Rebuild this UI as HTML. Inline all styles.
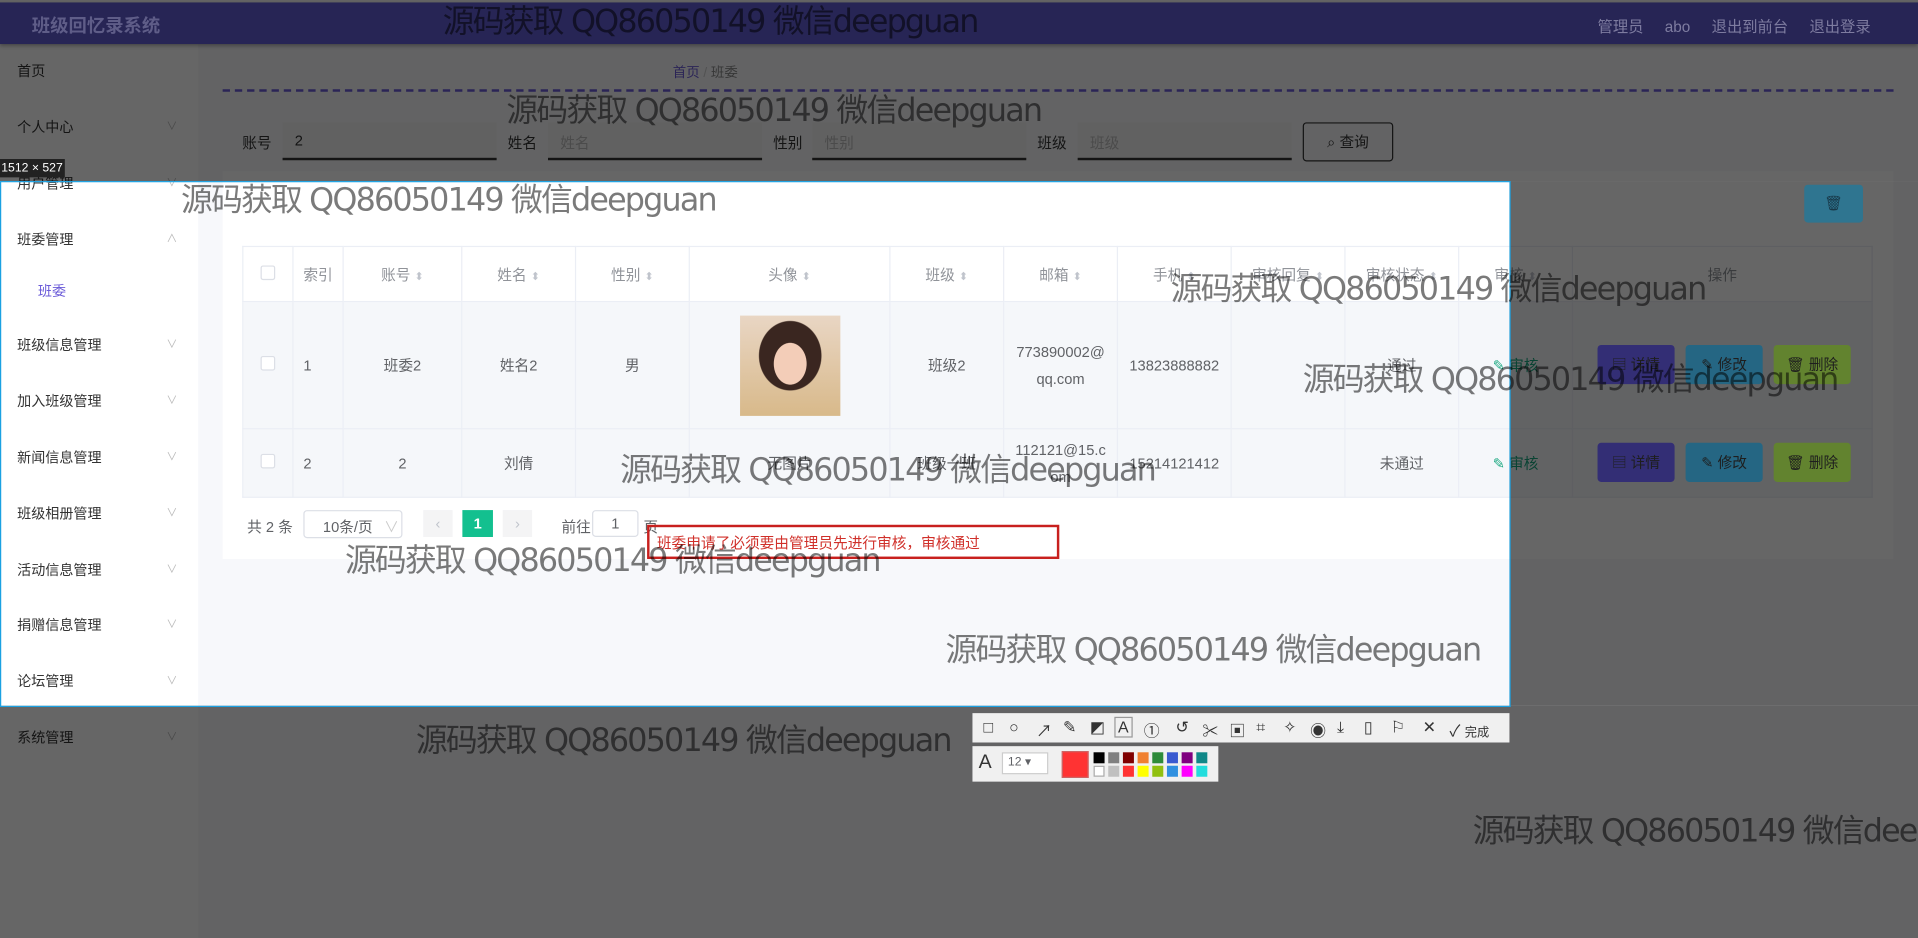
<!DOCTYPE html>
<html><head><meta charset="utf-8"><style>
*{margin:0;padding:0;box-sizing:border-box}
html,body{width:1918px;height:938px;overflow:hidden;background:#666}
body{font-family:"Liberation Sans","Noto Sans CJK SC",sans-serif;font-size:12px;color:#606266}
#w{position:absolute;left:0;top:0;width:1568px;height:767px;transform:scale(1.22322);transform-origin:0 0;background:#f7f8fb;overflow:hidden}
.a{position:absolute}
.side{left:0;top:36px;width:162px;height:731px;background:#fff}
.side div{position:absolute;left:14px;font-size:11.5px;color:#333}
.side span{position:absolute;left:136px;color:#bbb;font-size:9px}
.inp{position:absolute;top:100px;height:31px;background:#f3f3f3;border-bottom:2px solid #333;color:#bbb;padding:8px 10px;font-size:12px}
.lbl{position:absolute;top:108px;font-size:12px;color:#333}
table{position:absolute;left:198px;top:201px;border-collapse:collapse;width:1333px;table-layout:fixed}
td,th{border:1px solid #ebeef5;text-align:center;font-size:12px;color:#606266;font-weight:normal}
th{height:45px;background:#fff;color:#909399}
tr.r td{background:#f5f7fa}
.s{color:#c0c4cc;font-size:9px}
.cb{display:inline-block;width:12px;height:12px;border:1px solid #dcdfe6;background:#fff;border-radius:2px}
.btn{display:inline-block;width:63px;height:32px;line-height:32px;border-radius:3px;color:#1e1e1e;margin:0 3px;font-size:12px}
.ov{position:absolute;background:rgba(0,0,0,.6)}
.wm{position:absolute;font-size:26px;line-height:30px;color:rgba(0,0,0,.52);white-space:nowrap;z-index:20;font-family:"DejaVu Sans","Noto Sans CJK SC",sans-serif;letter-spacing:-1.5px}
.tb{position:absolute;background:#f0f0f0;z-index:15}
.tb i{position:absolute;font-style:normal;font-size:13px;color:#333;top:4px}
.sw{position:absolute;width:9px;height:9px}
</style></head><body><div id="w">
<div class="a side">
<div style="top:14px">首页</div>
<div style="top:60px">个人中心</div><span style="top:60px">∨</span>
<div style="top:106px">用户管理</div><span style="top:106px">∨</span>
<div style="top:152px">班委管理</div><span style="top:152px">∧</span>
<div style="top:194px;left:31px;color:#6b5bd8">班委</div>
<div style="top:238px">班级信息管理</div><span style="top:238px">∨</span>
<div style="top:284px">加入班级管理</div><span style="top:284px">∨</span>
<div style="top:330px">新闻信息管理</div><span style="top:330px">∨</span>
<div style="top:376px">班级相册管理</div><span style="top:376px">∨</span>
<div style="top:422px">活动信息管理</div><span style="top:422px">∨</span>
<div style="top:467px">捐赠信息管理</div><span style="top:467px">∨</span>
<div style="top:513px">论坛管理</div><span style="top:513px">∨</span>
<div style="top:559px">系统管理</div><span style="top:559px">∨</span>
</div>
<div class="a" style="left:550px;top:51px;font-size:11px;color:#6b5bd8">首页 <span style="color:#ccc">/</span> <span style="color:#888">班委</span></div>
<div class="a" style="left:182px;top:73px;width:1366px;border-top:2px dashed #6b5bd8"></div>
<div class="lbl" style="left:198px">账号</div><div class="inp" style="left:231px;width:175px;color:#333">2</div>
<div class="lbl" style="left:415px">姓名</div><div class="inp" style="left:448px;width:175px">姓名</div>
<div class="lbl" style="left:632px">性别</div><div class="inp" style="left:664px;width:175px">性别</div>
<div class="lbl" style="left:848px">班级</div><div class="inp" style="left:881px;width:175px">班级</div>
<div class="a" style="left:1065px;top:100px;width:74px;height:32px;border:1px solid #333;border-radius:3px;text-align:center;line-height:30px;color:#333">⌕ 查询</div>
<div class="a" style="left:182px;top:140px;width:1366px;height:317px;background:#fff"></div>
<table>
<colgroup><col style="width:41px"><col style="width:41px"><col style="width:97px"><col style="width:93px"><col style="width:93px"><col style="width:164px"><col style="width:93px"><col style="width:93px"><col style="width:93px"><col style="width:93px"><col style="width:93px"><col style="width:93px"><col></colgroup>
<tr><th><span class="cb"></span></th><th>索引</th><th>账号 <span class="s">⬍</span></th><th>姓名 <span class="s">⬍</span></th><th>性别 <span class="s">⬍</span></th><th>头像 <span class="s">⬍</span></th><th>班级 <span class="s">⬍</span></th><th>邮箱 <span class="s">⬍</span></th><th>手机 <span class="s">⬍</span></th><th>审核回复 <span class="s">⬍</span></th><th>审核状态 <span class="s">⬍</span></th><th>审核 <span class="s">⬍</span></th><th>操作</th></tr>
<tr class="r" style="height:104px"><td><span class="cb"></span></td><td style="text-align:left;padding-left:8px">1</td><td>班委2</td><td>姓名2</td><td>男</td><td><div style="margin:0 auto;width:82px;height:82px;background:radial-gradient(ellipse 22px 28px at 50% 48%,#f3cdb8 60%,transparent 62%),radial-gradient(ellipse 36px 40px at 50% 40%,#3a2620 70%,transparent 72%),linear-gradient(#e9d6c4,#d8b98a)"></div></td><td>班级2</td><td style="line-height:22px">773890002@<br>qq.com</td><td>13823888882</td><td></td><td>通过</td><td style="color:#1aa880">✎ 审核</td><td></td></tr>
<tr class="r" style="height:56px"><td><span class="cb"></span></td><td style="text-align:left;padding-left:8px">2</td><td>2</td><td>刘倩</td><td></td><td>无图片</td><td>班级一班</td><td style="line-height:22px">112121@15.c<br>om</td><td>15214121412</td><td></td><td>未通过</td><td style="color:#1aa880">✎ 审核</td><td></td></tr>
</table>
<div class="a" style="left:202px;top:422px">共 2 条</div>
<div class="a" style="left:248px;top:417px;width:81px;height:23px;border:1px solid #dcdfe6;border-radius:3px;padding:4px 0 0 15px;white-space:nowrap">10条/页 <span style="color:#ccc;margin-left:6px">∨</span></div>
<div class="a" style="left:346px;top:417px;width:24px;height:22px;background:#f4f4f5;text-align:center;line-height:22px;color:#c0c4cc">‹</div>
<div class="a" style="left:378px;top:417px;width:25px;height:22px;background:#13c08f;text-align:center;line-height:22px;color:#fff;font-weight:bold">1</div>
<div class="a" style="left:411px;top:417px;width:24px;height:22px;background:#f4f4f5;text-align:center;line-height:22px;color:#c0c4cc">›</div>
<div class="a" style="left:459px;top:422px">前往</div>
<div class="a" style="left:484px;top:417px;width:38px;height:22px;border:1px solid #dcdfe6;border-radius:3px;text-align:center;line-height:20px">1</div>
<div class="a" style="left:526px;top:422px">页</div>
<div class="a" style="left:529px;top:429px;width:337px;height:28px;border:2px solid #c8201e;color:#d0302a;padding:4px 6px;font-size:12px">班委申请了必须要由管理员先进行审核，审核通过</div>
<!-- overlays -->
<div class="ov" style="left:0;top:0;width:1568px;height:148px"></div>
<div class="ov" style="left:0;top:577px;width:1568px;height:190px"></div>
<div class="ov" style="left:1234px;top:148px;width:334px;height:429px"></div>
<div class="a" style="left:0;top:2px;width:1568px;height:34px;background:#272555;z-index:10;box-shadow:0 2px 3px rgba(0,0,0,.3)"><div class="a" style="left:26px;top:8px;font-size:15px;font-weight:bold;color:#5f5d88">班级回忆录系统</div><div class="a" style="left:1306px;top:9px;font-size:12.5px;color:#7e7ca0;word-spacing:14px;white-space:nowrap">管理员&nbsp;abo 退出到前台 退出登录</div></div>
<div class="a" style="left:1475px;top:151px;width:48px;height:31px;background:#2f7590;border-radius:3px;z-index:10;text-align:center;line-height:31px;color:#183848">🗑</div>
<div class="a" style="left:1306px;top:282px;z-index:10;width:230px"><span class="btn" style="background:#332e75;margin:0;text-align:center">▤ 详情</span><span class="btn" style="background:#256683;margin:0 0 0 9px;text-align:center">✎ 修改</span><span class="btn" style="background:#62832f;margin:0 0 0 9px;text-align:center">🗑 删除</span></div>
<div class="a" style="left:1306px;top:362px;z-index:10;width:230px"><span class="btn" style="background:#332e75;margin:0;text-align:center">▤ 详情</span><span class="btn" style="background:#256683;margin:0 0 0 9px;text-align:center">✎ 修改</span><span class="btn" style="background:#62832f;margin:0 0 0 9px;text-align:center">🗑 删除</span></div>
<div class="a" style="left:0;top:148px;width:1235px;height:430px;border:1px solid #1ba1e2;z-index:12"></div>
<div class="a" style="left:0;top:130px;width:53px;height:15px;background:#222;color:#fff;font-size:10px;line-height:15px;padding-left:1px;z-index:12">1512 × 527</div>
<div class="tb" style="left:795px;top:583px;width:439px;height:24px">
<i style="left:9px">□</i><i style="left:30px">○</i><i style="left:52px">↗</i><i style="left:74px">✎</i><i style="left:96px">◩</i><i style="left:116px;border:1px solid #999;padding:0 2px;top:3px">A</i><i style="left:140px">①</i><i style="left:166px">↺</i><i style="left:188px">✂</i><i style="left:210px">▣</i><i style="left:232px">⌗</i><i style="left:254px">✧</i><i style="left:276px">◉</i><i style="left:298px">⤓</i><i style="left:320px">▯</i><i style="left:342px">⚐</i><i style="left:368px">✕</i><i style="left:390px">✓ <span style="font-size:10px">完成</span></i></div>
<div class="tb" style="left:795px;top:610px;width:201px;height:29px">
<i style="left:5px;top:5px;font-size:16px">A</i>
<div class="a" style="left:24px;top:5px;width:38px;height:18px;background:#fff;border:1px solid #ccc;font-size:10px;padding:2px 4px">12 ▾</div>
<div class="a" style="left:73px;top:4px;width:22px;height:22px;background:#f33;border:1px solid #c66"></div>
<div class="sw" style="left:99px;top:5px;background:#000"></div><div class="sw" style="left:111px;top:5px;background:#808080"></div><div class="sw" style="left:123px;top:5px;background:#800000"></div><div class="sw" style="left:135px;top:5px;background:#f08030"></div><div class="sw" style="left:147px;top:5px;background:#2e8b3a"></div><div class="sw" style="left:159px;top:5px;background:#3a5ad0"></div><div class="sw" style="left:171px;top:5px;background:#800080"></div><div class="sw" style="left:183px;top:5px;background:#108888"></div>
<div class="sw" style="left:99px;top:16px;background:#fff;border:1px solid #aaa"></div><div class="sw" style="left:111px;top:16px;background:#c0c0c0"></div><div class="sw" style="left:123px;top:16px;background:#f33"></div><div class="sw" style="left:135px;top:16px;background:#ff0"></div><div class="sw" style="left:147px;top:16px;background:#90c010"></div><div class="sw" style="left:159px;top:16px;background:#3090e0"></div><div class="sw" style="left:171px;top:16px;background:#f0f"></div><div class="sw" style="left:183px;top:16px;background:#2dd"></div>
</div>
<div class="wm" style="left:362px;top:3px">源码获取 QQ86050149 微信deepguan</div>
<div class="wm" style="left:414px;top:76px">源码获取 QQ86050149 微信deepguan</div>
<div class="wm" style="left:148px;top:149px">源码获取 QQ86050149 微信deepguan</div>
<div class="wm" style="left:957px;top:222px">源码获取 QQ86050149 微信deepguan</div>
<div class="wm" style="left:1065px;top:296px">源码获取 QQ86050149 微信deepguan</div>
<div class="wm" style="left:507px;top:370px">源码获取 QQ86050149 微信deepguan</div>
<div class="wm" style="left:282px;top:444px">源码获取 QQ86050149 微信deepguan</div>
<div class="wm" style="left:773px;top:517px">源码获取 QQ86050149 微信deepguan</div>
<div class="wm" style="left:340px;top:591px">源码获取 QQ86050149 微信deepguan</div>
<div class="wm" style="left:1204px;top:665px">源码获取 QQ86050149 微信deepguan</div>
</div></body></html>
